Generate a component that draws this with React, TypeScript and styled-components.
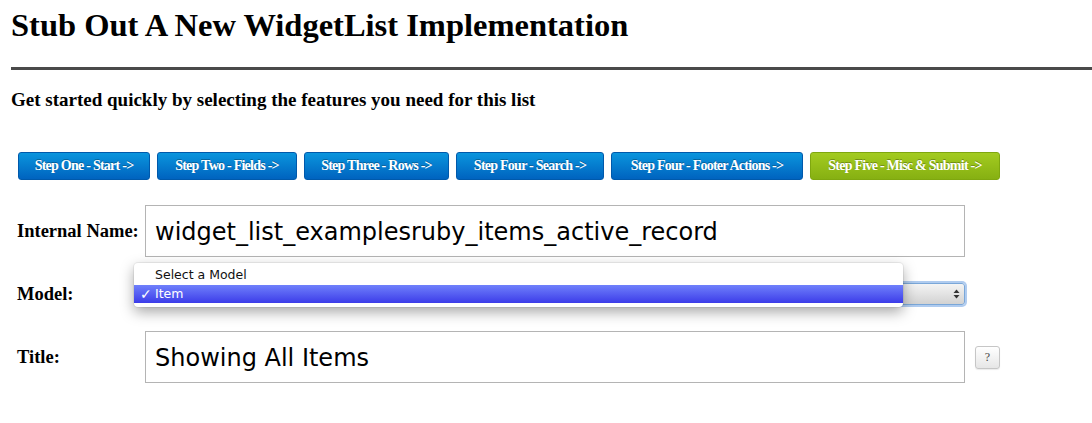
import styled, { createGlobalStyle } from 'styled-components'

const GlobalStyle = createGlobalStyle`
  html, body {
    margin: 0;
    padding: 0;
    background: #ffffff;
    font-family: "Liberation Serif", "Times New Roman", serif;
    color: #000;
  }
`

const steps = [
  { label: 'Step One - Start ->', width: 132, tone: 'blue' },
  { label: 'Step Two - Fields ->', width: 140, tone: 'blue' },
  { label: 'Step Three - Rows ->', width: 145, tone: 'blue' },
  { label: 'Step Four - Search ->', width: 148, tone: 'blue' },
  { label: 'Step Four - Footer Actions ->', width: 192, tone: 'blue' },
  { label: 'Step Five - Misc & Submit ->', width: 190, tone: 'green' },
]

export default function App() {
  return (
    <>
      <GlobalStyle />
      <Page>
        <Heading>Stub Out A New WidgetList Implementation</Heading>
        <Rule />
        <Subtitle>Get started quickly by selecting the features you need for this list</Subtitle>
        <StepBar>
          {steps.map(s => (
            <StepButton key={s.label} $width={s.width} $tone={s.tone}>
              {s.label}
            </StepButton>
          ))}
        </StepBar>
        <Form>
          <Row>
            <Label>Internal Name:</Label>
            <TextBox>widget_list_examplesruby_items_active_record</TextBox>
          </Row>
          <SelectRow>
            <Label>Model:</Label>
            <SelectWrap>
              <SelectBox>
                <Arrows>
                  <svg width="7" height="10" viewBox="0 0 7 10">
                    <path d="M3.5 0.5 L6.5 4 L0.5 4 Z" fill="#333" />
                    <path d="M3.5 9.5 L6.5 6 L0.5 6 Z" fill="#333" />
                  </svg>
                </Arrows>
              </SelectBox>
              <Menu>
                <Option>Select a Model</Option>
                <Option $active>
                  <Check>✓</Check>Item
                </Option>
              </Menu>
            </SelectWrap>
          </SelectRow>
          <Row>
            <Label>Title:</Label>
            <TextBox>Showing All Items</TextBox>
            <HelpButton>?</HelpButton>
          </Row>
        </Form>
      </Page>
    </>
  )
}

const Page = styled.div`
  padding: 4px 0 0 11px;
`

const Heading = styled.h1`
  margin: 0;
  font-size: 32.5px;
  font-weight: bold;
  line-height: 42px;
`

const Rule = styled.div`
  height: 3px;
  background: #4a4a4a;
  margin-top: 21px;
`

const Subtitle = styled.h3`
  margin: 18px 0 0 0;
  font-size: 19px;
  font-weight: bold;
  line-height: 23px;
`

const StepBar = styled.div`
  display: flex;
  gap: 7px;
  margin: 41px 0 0 7px;
`

const StepButton = styled.div<{ $width: number; $tone: string }>`
  width: ${p => p.$width}px;
  height: 28px;
  box-sizing: border-box;
  display: flex;
  align-items: center;
  justify-content: center;
  border-radius: 3px;
  font-size: 14px;
  font-weight: bold;
  color: #fff;
  letter-spacing: -0.75px;
  text-shadow: 0 -1px 0 rgba(0, 0, 0, 0.3);
  background: ${p =>
    p.$tone === 'green'
      ? 'linear-gradient(#a3cb20, #86b012)'
      : 'linear-gradient(#0a95dd, #0063bf)'};
  border: 1px solid ${p => (p.$tone === 'green' ? '#7fa70f' : '#0059ab')};
`

const Form = styled.div`
  margin: 25px 0 0 6px;
  display: flex;
  flex-direction: column;
`

const Row = styled.div`
  display: flex;
  align-items: center;
  height: 52px;
  margin-bottom: 26px;
`

const SelectRow = styled(Row)`
  height: 22px;
  margin-bottom: 26px;
`

const Label = styled.div`
  width: 128px;
  font-size: 18.5px;
  font-weight: bold;
  white-space: nowrap;
`

const TextBox = styled.div`
  width: 820px;
  height: 52px;
  box-sizing: border-box;
  border: 1px solid #b4b4b4;
  display: flex;
  align-items: center;
  padding: 2px 9px 0 9px;
  font-family: "DejaVu Sans", Verdana, sans-serif;
  font-size: 24px;
  color: #000;
`

const SelectWrap = styled.div`
  position: relative;
  width: 820px;
  height: 22px;
`

const SelectBox = styled.div`
  height: 100%;
  box-sizing: border-box;
  border: 1px solid #7aa7d8;
  border-radius: 3px;
  box-shadow: 0 0 0 2px rgba(110, 160, 225, 0.55);
  background: linear-gradient(#f4f4f4, #d2d2d2);
  display: flex;
  align-items: center;
  justify-content: flex-end;
  padding-right: 4px;
`

const Arrows = styled.div`
  display: flex;
  align-items: center;
`

const Menu = styled.div`
  position: absolute;
  left: -11px;
  top: -20px;
  width: 769px;
  background: #fff;
  border-radius: 4px;
  box-shadow: 0 5px 14px rgba(0, 0, 0, 0.35), 0 0 0 1px rgba(0, 0, 0, 0.06);
  padding: 1px 0 4px 0;
  font-family: "DejaVu Sans", Verdana, sans-serif;
  font-size: 12.5px;
`

const Option = styled.div<{ $active?: boolean }>`
  position: relative;
  height: ${p => (p.$active ? 18 : 21)}px;
  line-height: ${p => (p.$active ? 18 : 21)}px;
  padding-left: 21px;
  color: ${p => (p.$active ? '#fff' : '#111')};
  background: ${p => (p.$active ? 'linear-gradient(#6f80fb, #3c3ce9)' : 'transparent')};
`

const Check = styled.span`
  position: absolute;
  left: 6px;
  font-size: 14px;
`

const HelpButton = styled.div`
  width: 25px;
  height: 23px;
  box-sizing: border-box;
  margin-left: 10px;
  border: 1px solid #c6c6c6;
  border-radius: 3px;
  background: linear-gradient(#ffffff, #e6e6e6);
  box-shadow: 0 1px 1px rgba(0, 0, 0, 0.08);
  display: flex;
  align-items: center;
  justify-content: center;
  font-size: 12px;
  color: #444;
`
